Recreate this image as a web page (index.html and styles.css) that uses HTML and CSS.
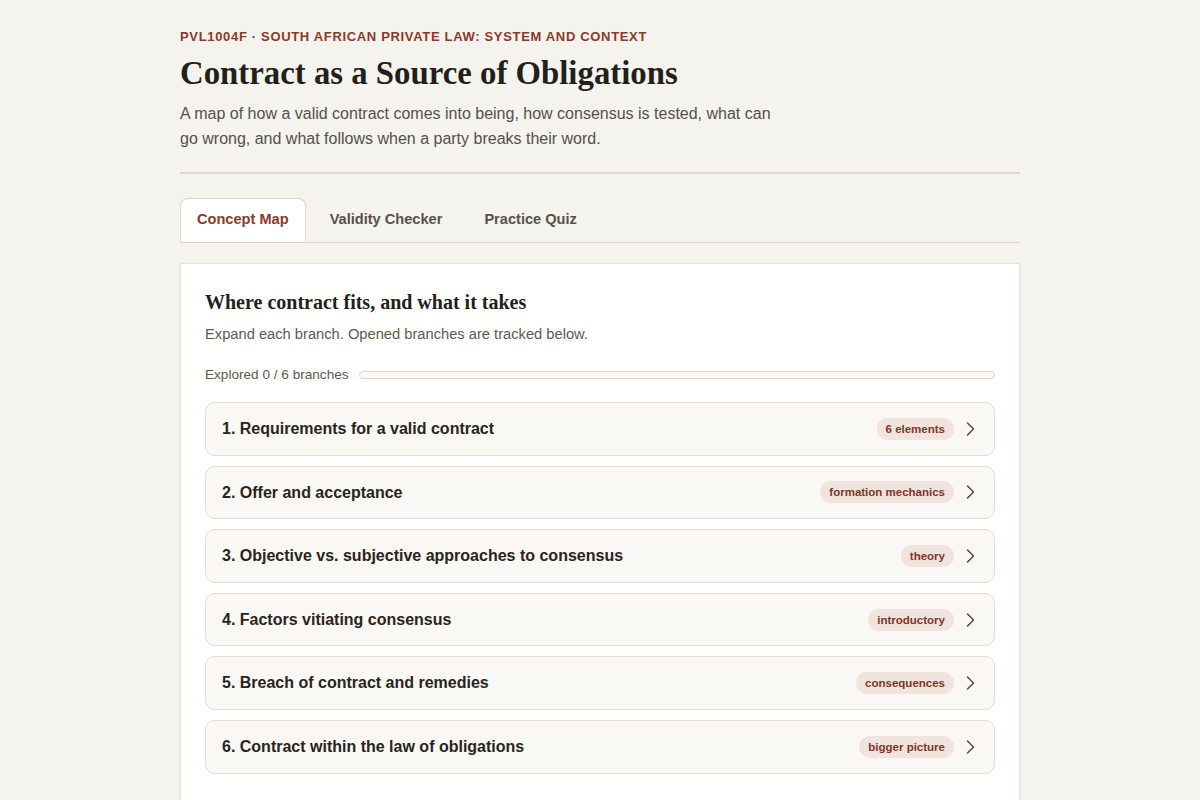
FILE: index.html
```html
<!DOCTYPE html>
<html lang="en">
<head>
<meta charset="utf-8">
<title>Contract as a Source of Obligations</title>
<link rel="stylesheet" href="styles.css">
</head>
<body>
<div class="page">
  <header class="header">
    <div class="eyebrow">PVL1004F · South African Private Law: System and Context</div>
    <h1 class="title">Contract as a Source of Obligations</h1>
    <p class="lede">A map of how a valid contract comes into being, how consensus is tested, what can go wrong, and what follows when a party breaks their word.</p>
  </header>

  <nav class="tabs">
    <button class="tab tab-active">Concept Map</button>
    <button class="tab">Validity Checker</button>
    <button class="tab">Practice Quiz</button>
  </nav>

  <section class="card">
    <h2 class="card-title">Where contract fits, and what it takes</h2>
    <p class="card-desc">Expand each branch. Opened branches are tracked below.</p>
    <div class="progress">
      <span class="progress-label">Explored 0 / 6 branches</span>
      <div class="progress-track"><div class="progress-fill" style="width:0%"></div></div>
    </div>
    <div class="branches">
      <div class="branch"><span class="branch-title">1. Requirements for a valid contract</span><span class="branch-meta"><span class="badge">6 elements</span><svg class="chev" viewBox="0 0 16 16"><path d="M5.5 2 L11.5 8 L5.5 14"/></svg></span></div>
      <div class="branch"><span class="branch-title">2. Offer and acceptance</span><span class="branch-meta"><span class="badge">formation mechanics</span><svg class="chev" viewBox="0 0 16 16"><path d="M5.5 2 L11.5 8 L5.5 14"/></svg></span></div>
      <div class="branch"><span class="branch-title">3. Objective vs. subjective approaches to consensus</span><span class="branch-meta"><span class="badge">theory</span><svg class="chev" viewBox="0 0 16 16"><path d="M5.5 2 L11.5 8 L5.5 14"/></svg></span></div>
      <div class="branch"><span class="branch-title">4. Factors vitiating consensus</span><span class="branch-meta"><span class="badge">introductory</span><svg class="chev" viewBox="0 0 16 16"><path d="M5.5 2 L11.5 8 L5.5 14"/></svg></span></div>
      <div class="branch"><span class="branch-title">5. Breach of contract and remedies</span><span class="branch-meta"><span class="badge">consequences</span><svg class="chev" viewBox="0 0 16 16"><path d="M5.5 2 L11.5 8 L5.5 14"/></svg></span></div>
      <div class="branch"><span class="branch-title">6. Contract within the law of obligations</span><span class="branch-meta"><span class="badge">bigger picture</span><svg class="chev" viewBox="0 0 16 16"><path d="M5.5 2 L11.5 8 L5.5 14"/></svg></span></div>
    </div>
  </section>
</div>
</body>
</html>
```

FILE: styles.css
```css
* { box-sizing: border-box; }
html, body {
  margin: 0;
  padding: 0;
  background: #f5f3ee;
  font-family: "Liberation Sans", Arial, sans-serif;
  color: #2a2420;
}
.page {
  width: 840px;
  margin: 0 auto;
  padding-top: 29px;
}
.eyebrow {
  font-size: 13px;
  font-weight: 700;
  letter-spacing: 0.67px;
  text-transform: uppercase;
  color: #8a3a28;
  line-height: 16px;
}
.title {
  font-family: "Liberation Serif", "Times New Roman", serif;
  font-size: 32.8px;
  font-weight: 700;
  line-height: 40px;
  margin: 8px 0 0;
  color: #231f1b;
}
.lede {
  margin: 8px 0 0;
  max-width: 600px;
  font-size: 16px;
  line-height: 25px;
  color: #555049;
}
.header {
  padding-bottom: 21px;
  border-bottom: 2px solid #ddd6ca;
}
.tabs {
  display: flex;
  gap: 6px;
  margin-top: 24px;
  border-bottom: 1px solid #ddd6ca;
  height: 45px;
}
.tab {
  font-family: "Liberation Sans", Arial, sans-serif;
  font-size: 14.6px;
  font-weight: 700;
  color: #57514a;
  background: transparent;
  border: 1px solid transparent;
  border-bottom: none;
  border-radius: 8px 8px 0 0;
  padding: 0 17px 3px;
  height: 44px;
  cursor: pointer;
}
.tab-active {
  background: #ffffff;
  border-color: #ddd6ca;
  color: #8a3a28;
  padding: 0 16px 3px;
}
.card {
  margin-top: 20px;
  background: #ffffff;
  border: 1px solid #e6e0d6;
  border-bottom: none;
  box-shadow: 0 1px 3px rgba(60, 40, 20, 0.06);
  padding: 25px 24px 40px;
}
.card-title {
  font-family: "Liberation Serif", "Times New Roman", serif;
  font-size: 20px;
  font-weight: 700;
  line-height: 26px;
  margin: 0;
  color: #231f1b;
}
.card-desc {
  margin: 9px 0 0;
  font-size: 14.7px;
  line-height: 20px;
  color: #5f5951;
}
.progress {
  display: flex;
  align-items: center;
  gap: 10px;
  margin-top: 22px;
}
.progress-label {
  font-size: 13.6px;
  line-height: 18px;
  color: #5f5951;
  white-space: nowrap;
}
.progress-track {
  flex: 1;
  height: 8px;
  border: 1px solid #e0d8cb;
  border-radius: 4px;
  background: #faf8f4;
  overflow: hidden;
}
.progress-fill {
  height: 100%;
  background: #8a3a28;
}
.branches {
  display: flex;
  flex-direction: column;
  gap: 10px;
  margin-top: 18px;
}
.branch {
  display: flex;
  align-items: center;
  justify-content: space-between;
  background: #faf8f4;
  border: 1px solid #e3dccf;
  border-radius: 10px;
  padding: 15px 16px 15px 16px;
  height: 53.6px;
}
.branch-title {
  font-size: 16px;
  font-weight: 700;
  line-height: 21.6px;
  color: #2a2420;
}
.branch-meta {
  display: flex;
  align-items: center;
  gap: 8px;
}
.badge {
  font-size: 11.5px;
  font-weight: 700;
  color: #7c3626;
  background: #f1e3de;
  border-radius: 999px;
  padding: 4px 9px;
  line-height: 14px;
}
.chev {
  width: 16px;
  height: 16px;
  fill: none;
  stroke: #55504a;
  stroke-width: 1.6;
  stroke-linecap: round;
  stroke-linejoin: round;
}
```
